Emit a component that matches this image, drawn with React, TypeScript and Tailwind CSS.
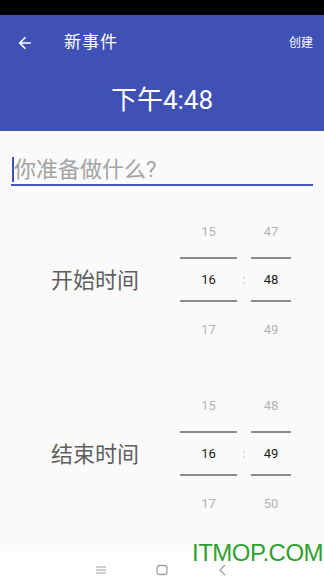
import React from 'react';
import { ArrowLeft } from 'lucide-react';

const cjk = { fontFamily: 'Roboto, "Noto Sans CJK SC", sans-serif' };

type PickerProps = { label: string; hour: number; minute: number };

const Picker = ({ label, hour, minute }: PickerProps) => {
  const col = (values: number[], width: string) => (
    <div className={`flex flex-col ${width}`}>
      <div className="h-[50px] flex items-center justify-center text-[13px] text-[#b4b4b4]">{values[0]}</div>
      <div className="h-[2px] bg-[#8a8a8a]" />
      <div className="h-[41px] flex items-center justify-center text-[13px] text-[#1a1a1a]">{values[1]}</div>
      <div className="h-[2px] bg-[#8a8a8a]" />
      <div className="h-[56px] flex items-center justify-center text-[13px] text-[#b4b4b4]">{values[2]}</div>
    </div>
  );
  return (
    <div className="flex items-start">
      <div className="w-[180px] h-[146px] flex items-center pl-[51px] text-[22px] text-[#5f5f5f]">
        <span>{label}</span>
      </div>
      {col([hour - 1, hour, hour + 1], 'w-[57px]')}
      <div className="w-[14px] pt-[52px] h-[93px] flex items-center justify-center text-[12px] text-[#b4b4b4]">:</div>
      {col([minute - 1, minute, minute + 1], 'w-[40px]')}
    </div>
  );
};

export default function App() {
  return (
    <div className="relative w-[324px] h-[576px] overflow-hidden bg-[#fafafa]" style={cjk}>
      <div className="h-[15px] bg-black" />
      <div className="h-[116px] bg-[#3f51b5] text-white flex flex-col">
        <div className="h-[56px] flex items-center">
          <ArrowLeft className="ml-[16px] w-[18px] h-[18px]" strokeWidth={2.2} />
          <span className="ml-[30px] text-[17px] tracking-[1px]">新事件</span>
          <span className="ml-auto mr-[11px] text-[12px]">创建</span>
        </div>
        <div className="flex-1 flex items-center justify-center pb-[2px]">
          <span className="text-[26px]">下午4:48</span>
        </div>
      </div>

      <div className="px-[11px] pt-[24px]">
        <div className="relative flex items-center h-[31px] border-b-2 border-[#4457b8]">
          <div className="w-[2px] h-[25px] bg-[#3f51b5] ml-[1px]" />
          <span className="text-[22px] text-[#a3a3a3] leading-none">你准备做什么?</span>
        </div>
      </div>

      <div className="mt-[21px] flex flex-col gap-[23px]">
        <Picker label="开始时间" hour={16} minute={48} />
        <Picker label="结束时间" hour={16} minute={49} />
      </div>

      <div className="absolute left-0 right-0 top-[551px] h-[48px] bg-white flex items-start pt-[13px] text-[#a0a0a0]">
        <div className="w-[324px] flex justify-between px-[95px]">
          <svg width="12" height="12" viewBox="0 0 12 12" fill="none" stroke="currentColor" strokeWidth="1.2">
            <path d="M1 3h10M1 6h10M1 9h10" />
          </svg>
          <svg width="12" height="12" viewBox="0 0 12 12" fill="none" stroke="currentColor" strokeWidth="1.3">
            <rect x="1" y="1.5" width="10" height="9" rx="2.5" />
          </svg>
          <svg width="12" height="12" viewBox="0 0 12 12" fill="none" stroke="currentColor" strokeWidth="1.3">
            <path d="M8 1L3 6l5 5" />
          </svg>
        </div>
      </div>

      <div
        className="absolute left-[192px] top-[535px] text-[24px] text-[#2f9f2f] tracking-[-0.5px]"
        style={{ fontFamily: '"Liberation Sans", Arial, sans-serif' }}
      >
        ITMOP.COM
      </div>
    </div>
  );
}
